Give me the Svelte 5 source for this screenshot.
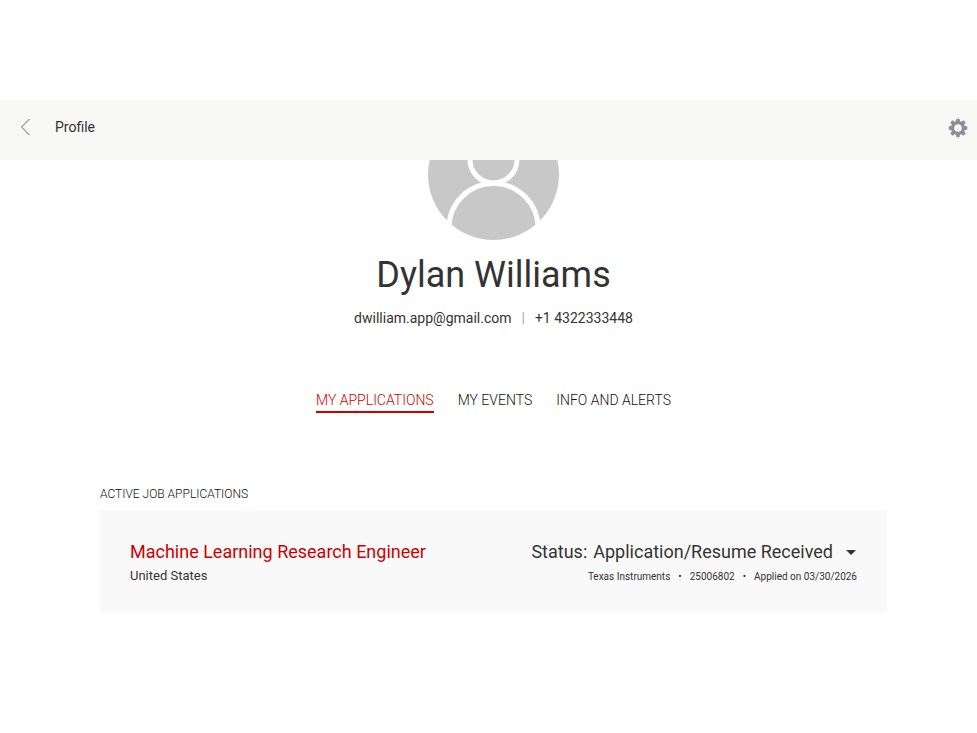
<script>
  let activeTab = $state("My Applications");

  const tabs = ["My Applications", "My Events", "Info and Alerts"];
  const gearTeeth = [0, 45, 90, 135, 180, 225, 270, 315];

  const user = {
    name: "Dylan Williams",
    email: "dwilliam.app@gmail.com",
    phone: "+1 4322333448",
  };

  const applications = [
    {
      title: "Machine Learning Research Engineer",
      location: "United States",
      status: "Application/Resume Received",
      details: ["Texas Instruments", "25006802", "Applied on 03/30/2026"],
    },
  ];
</script>

<header class="header">
  <button class="icon-button back" aria-label="Back">
    <svg width="10" height="18" viewBox="0 0 10 18" fill="none">
      <path d="M9.5 1L1.5 9L9.5 17" stroke="#666" stroke-width="1" />
    </svg>
  </button>
  <span class="header-title">Profile</span>
  <button class="icon-button settings" aria-label="Settings">
    <svg width="20" height="20" viewBox="-10 -10 20 20">
      <circle r="5.4" fill="none" stroke="#8c8e91" stroke-width="3.2" />
      {#each gearTeeth as angle}
        <path
          d="M-2.2 -6L-1.5 -9.3H1.5L2.2 -6Z"
          fill="#8c8e91"
          transform="rotate({angle})"
        />
      {/each}
    </svg>
  </button>
</header>

<main class="content">
  <section class="profile">
    <svg class="avatar" width="131" height="80" viewBox="0 51 131 80" fill="none">
      <defs>
        <clipPath id="avatar-clip">
          <circle cx="65.5" cy="65.5" r="65.5" />
        </clipPath>
      </defs>
      <g clip-path="url(#avatar-clip)">
        <rect width="131" height="131" fill="#c8c8c8" />
        <circle cx="65.5" cy="50.5" r="23.5" stroke="#fff" stroke-width="5" />
        <circle cx="65.5" cy="119" r="44.5" stroke="#fff" stroke-width="5" />
      </g>
    </svg>
    <h1>{user.name}</h1>
    <p class="contact">
      <span>{user.email}</span>
      <span class="divider">|</span>
      <span>{user.phone}</span>
    </p>
  </section>

  <nav class="tabs">
    {#each tabs as tab}
      <button
        class="tab"
        class:active={tab === activeTab}
        onclick={() => (activeTab = tab)}
      >
        {tab}
      </button>
    {/each}
  </nav>

  <section>
    <h2>Active Job Applications</h2>
    {#each applications as job}
      <article class="card">
        <div>
          <a class="job-title" href="#job">{job.title}</a>
          <p class="location">{job.location}</p>
        </div>
        <div class="status-column">
          <button class="status">
            <span>Status:</span>
            <span>{job.status}</span>
            <svg class="caret" width="10" height="5" viewBox="0 0 10 5">
              <path d="M0 0H10L5 5Z" fill="#333" />
            </svg>
          </button>
          <ul class="details">
            {#each job.details as detail}
              <li>{detail}</li>
            {/each}
          </ul>
        </div>
      </article>
    {/each}
  </section>
</main>

<style>
  :global(body) {
    background: #fff;
    color: #333;
    font-family: Roboto, sans-serif;
    font-size: 14px;
  }

  button {
    padding: 0;
    border: none;
    background: none;
    color: inherit;
    font: inherit;
    cursor: pointer;
  }

  h1,
  h2,
  p,
  ul {
    margin: 0;
    padding: 0;
    font-weight: 400;
  }

  .header {
    display: flex;
    align-items: center;
    box-sizing: border-box;
    height: 60px;
    margin-top: 100px;
    padding: 0 9px 6px 20px;
    background: #f8f8f6;
  }

  .icon-button {
    display: flex;
  }

  .settings {
    padding-top: 2px;
  }

  .header-title {
    flex: 1;
    margin-left: 25px;
  }

  .content {
    padding: 0 90px 40px 100px;
  }

  .profile {
    display: flex;
    flex-direction: column;
    align-items: center;
  }

  h1 {
    margin-top: 12px;
    font-size: 36px;
    line-height: 46px;
  }

  .contact {
    display: flex;
    gap: 10px;
    margin-top: 10px;
    line-height: 20px;
  }

  .divider {
    color: #aaa;
  }

  .tabs {
    display: flex;
    justify-content: center;
    gap: 24px;
    margin-top: 61px;
  }

  .tab {
    border-bottom: 2px solid transparent;
    color: #111;
    font-weight: 300;
    line-height: 22px;
    text-transform: uppercase;
  }

  .active {
    border-color: #c00;
    color: #c00;
  }

  h2 {
    margin-top: 73px;
    color: #111;
    font-size: 12px;
    font-weight: 300;
    line-height: 16px;
    text-transform: uppercase;
  }

  .card {
    display: flex;
    justify-content: space-between;
    margin-top: 8px;
    padding: 30px 30px 23px;
    background: #f9f9f9;
  }

  .job-title {
    color: #c00;
    font-size: 18px;
    line-height: 24px;
    text-decoration: none;
  }

  .location {
    font-size: 13px;
    line-height: 24px;
  }

  .status-column {
    display: flex;
    flex-direction: column;
    align-items: flex-end;
  }

  .status {
    display: flex;
    align-items: center;
    gap: 6px;
    font-size: 18px;
    line-height: 24px;
  }

  .caret {
    margin: 0 1px 0 7px;
  }

  .details {
    display: flex;
    font-size: 10px;
    line-height: 26px;
    list-style: none;
  }

  .details li + li::before {
    content: "•";
    margin: 0 8px;
  }
</style>
